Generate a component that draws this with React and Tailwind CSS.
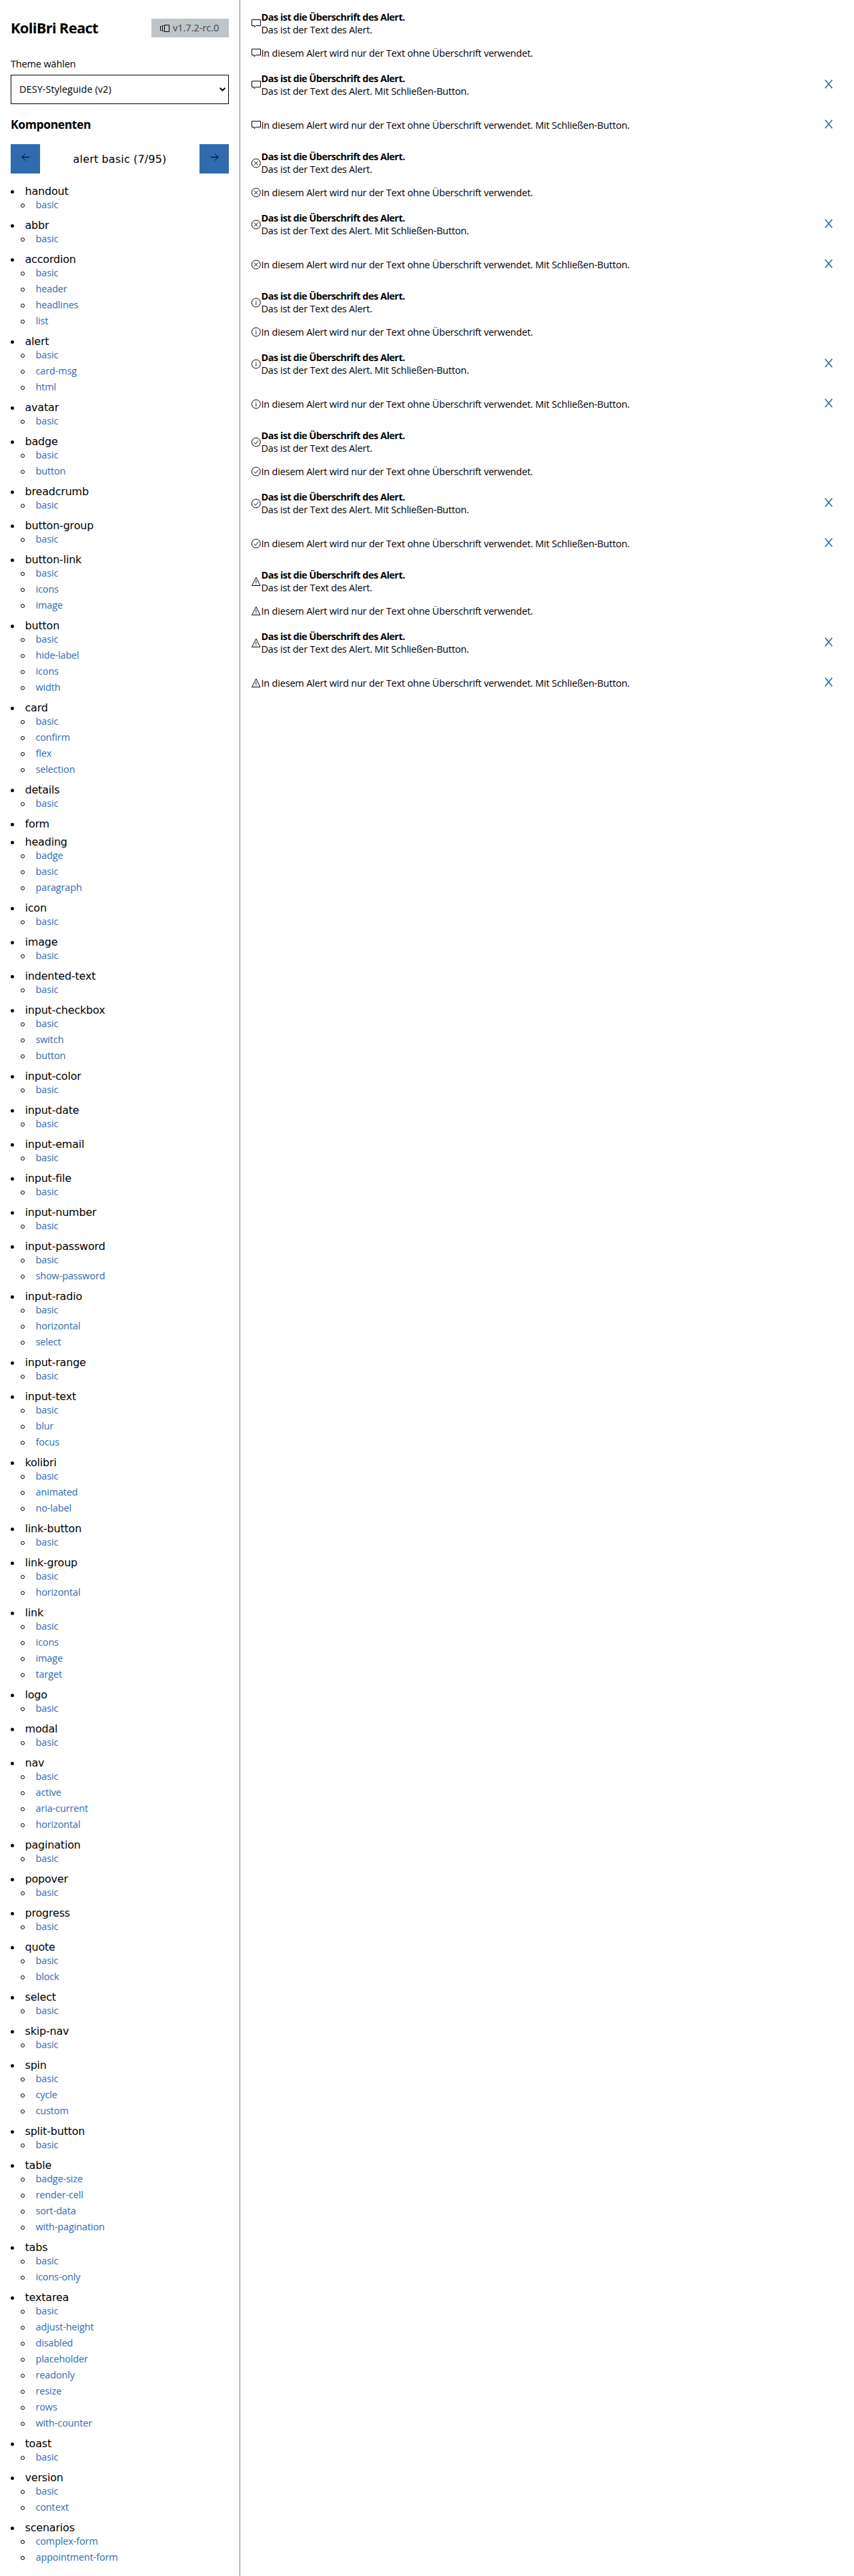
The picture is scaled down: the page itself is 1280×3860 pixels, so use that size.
import React from "react";

const TOPICS = [
  ["handout", "basic"],
  ["abbr", "basic"],
  ["accordion", "basic", "header", "headlines", "list"],
  ["alert", "basic", "card-msg", "html"],
  ["avatar", "basic"],
  ["badge", "basic", "button"],
  ["breadcrumb", "basic"],
  ["button-group", "basic"],
  ["button-link", "basic", "icons", "image"],
  ["button", "basic", "hide-label", "icons", "width"],
  ["card", "basic", "confirm", "flex", "selection"],
  ["details", "basic"],
  ["form"],
  ["heading", "badge", "basic", "paragraph"],
  ["icon", "basic"],
  ["image", "basic"],
  ["indented-text", "basic"],
  ["input-checkbox", "basic", "switch", "button"],
  ["input-color", "basic"],
  ["input-date", "basic"],
  ["input-email", "basic"],
  ["input-file", "basic"],
  ["input-number", "basic"],
  ["input-password", "basic", "show-password"],
  ["input-radio", "basic", "horizontal", "select"],
  ["input-range", "basic"],
  ["input-text", "basic", "blur", "focus"],
  ["kolibri", "basic", "animated", "no-label"],
  ["link-button", "basic"],
  ["link-group", "basic", "horizontal"],
  ["link", "basic", "icons", "image", "target"],
  ["logo", "basic"],
  ["modal", "basic"],
  ["nav", "basic", "active", "aria-current", "horizontal"],
  ["pagination", "basic"],
  ["popover", "basic"],
  ["progress", "basic"],
  ["quote", "basic", "block"],
  ["select", "basic"],
  ["skip-nav", "basic"],
  ["spin", "basic", "cycle", "custom"],
  ["split-button", "basic"],
  ["table", "badge-size", "render-cell", "sort-data", "with-pagination"],
  ["tabs", "basic", "icons-only"],
  ["textarea", "basic", "adjust-height", "disabled", "placeholder", "readonly", "resize", "rows", "with-counter"],
  ["toast", "basic"],
  ["version", "basic", "context"],
  ["scenarios", "complex-form", "appointment-form"],
];

const ALERT_TYPES = ["default", "error", "info", "success", "warning"];

const GLYPHS = {
  default: <path d="M.7 1.5h13v9H6.900L4.400 12.800v-2.300H.7z" />,
  error: (
    <>
      <circle cx="7" cy="7.5" r="6.5" />
      <path d="M4.3 4.8l5.4 5.4M9.7 4.8l-5.4 5.4" />
    </>
  ),
  info: (
    <>
      <circle cx="7" cy="7.5" r="6.5" />
      <path d="M7 6.6v4.2M7 4.3v1.3" />
    </>
  ),
  success: (
    <>
      <circle cx="7" cy="7.5" r="6.5" />
      <path d="M3.7 8l2.3 2.2L10.5 5.2" />
    </>
  ),
  warning: <path d="M7 1.2L13.2 13.5H.8zM7 5.6v4M7 10.6v1.2" />,
};

function StatusIcon({ type }) {
  return (
    <svg className="mr-[0.5px] h-[15px] w-[15px] shrink-0" viewBox="0 0 15 15" fill="none" stroke="black" strokeWidth="1">
      <g transform="translate(.8 0)">{GLYPHS[type]}</g>
    </svg>
  );
}

function Alert({ type, heading, closable, children }) {
  return (
    <div className={closable ? "flex h-11 items-center" : "flex items-center"}>
      <StatusIcon type={type} />
      <div className="grow text-[14.5px] leading-[19px] tracking-[-0.2px]">
        {heading && <div className="font-bold tracking-[-0.52px]">{heading}</div>}
        <div>{children}</div>
      </div>
      {closable && (
        <button className="flex h-11 w-11 items-center justify-center pb-0.5" aria-label="Schließen">
          <svg className="h-[14px] w-3" viewBox="0 0 12 14" fill="none" stroke="#306bb0" strokeWidth="1.7">
            <path d="M.7.7l10.6 12.6M11.3.7L.7 13.3" />
          </svg>
        </button>
      )}
    </div>
  );
}

function ArrowButton({ path, label }) {
  return (
    <button aria-label={label} className="flex h-11 w-11 items-center justify-center bg-[#306bb0] pb-[5px]">
      <svg className="h-[11px] w-[13px]" viewBox="0 0 13 11" fill="none" stroke="black" strokeWidth="1">
        <path d={path} />
      </svg>
    </button>
  );
}

function Topic({ name, samples }) {
  return (
    <li className="mb-[10px]">
      <div className="flex h-[17px] items-center">
        <span className="mt-[2px] mr-[16.5px] h-[5px] w-[5px] rounded-full bg-black" />
        <span className="font-[DejaVu_Sans,sans-serif] text-base leading-[17px] tracking-[-0.2px]">{name}</span>
      </div>
      {samples.length > 0 && (
        <ul className="pl-[15px]">
          {samples.map((sample) => (
            <li key={sample} className="flex h-6 items-center">
              <span className="mt-px mr-[16.5px] h-[6px] w-[6px] rounded-full border border-black" />
              <a className="text-[14.5px] leading-6 tracking-[-0.15px] text-[#306bb0]">{sample}</a>
            </li>
          ))}
        </ul>
      )}
    </li>
  );
}

function Sidebar() {
  return (
    <aside className="h-[3860px] w-[360px] shrink-0 border-r border-[#808080] px-4 pt-7">
      <div className="flex items-center justify-between">
        <h1 className="h-7 text-[22px] leading-[26px] font-bold tracking-[-0.75px]">KoliBri React</h1>
        <div className="flex h-7 w-[116px] items-center bg-[#bec5c9] pl-[13px] text-[14.5px] text-[#3f4549]">
          <svg className="mr-[5px] h-[11px] w-[14px]" viewBox="0 0 14 11" fill="none" stroke="black" strokeWidth="1">
            <path d="M6.5.5h7v10h-7zM5.2 1.5H3.5v8h1.7M2 2.5H.5v6H2" />
          </svg>
          <span className="leading-7">v1.7.2-rc.0</span>
        </div>
      </div>
      <div className="mt-[30px] text-[14.5px] leading-5 tracking-[-0.15px]">Theme wählen</div>
      <div className="mt-[6px] flex h-11 items-center justify-between border border-black pr-1 pl-3 text-[14.5px] tracking-[0.05px]">
        <span className="leading-[22px]">DESY-Styleguide (v2)</span>
        <svg className="h-[6px] w-[9px]" viewBox="0 0 9 6" fill="none" stroke="black" strokeWidth="2">
          <path d="M.7.8L4.5 4.5L8.3.8" />
        </svg>
      </div>
      <h2 className="mt-[18px] text-[17.5px] leading-6 font-bold tracking-[-0.38px]">Komponenten</h2>
      <div className="mt-[18px] flex items-center justify-between">
        <ArrowButton label="Zurück" path="M12.5 5.5H1M6 .5l-5 5 5 5" />
        <div className="pt-0.5 font-[DejaVu_Sans,sans-serif] text-base tracking-[0.15px]">alert basic (7/95)</div>
        <ArrowButton label="Weiter" path="M.5 5.5H12M7 .5l5 5-5 5" />
      </div>
      <ul className="mt-[18px]">
        {TOPICS.map(([name, ...samples]) => (
          <Topic key={name} name={name} samples={samples} />
        ))}
      </ul>
    </aside>
  );
}

export default function App() {
  return (
    <div className="flex h-[3860px] w-[1280px] overflow-hidden bg-white font-[Open_Sans,sans-serif] text-black">
      <Sidebar />
      <main className="flex grow flex-col gap-4 p-4">
        {ALERT_TYPES.map((type) => (
          <React.Fragment key={type}>
            <Alert type={type} heading="Das ist die Überschrift des Alert.">
              Das ist der Text des Alert.
            </Alert>
            <Alert type={type}>In diesem Alert wird nur der Text ohne Überschrift verwendet.</Alert>
            <Alert type={type} closable heading="Das ist die Überschrift des Alert.">
              Das ist der Text des Alert. Mit Schließen-Button.
            </Alert>
            <Alert type={type} closable>
              In diesem Alert wird nur der Text ohne Überschrift verwendet. Mit Schließen-Button.
            </Alert>
          </React.Fragment>
        ))}
      </main>
    </div>
  );
}
